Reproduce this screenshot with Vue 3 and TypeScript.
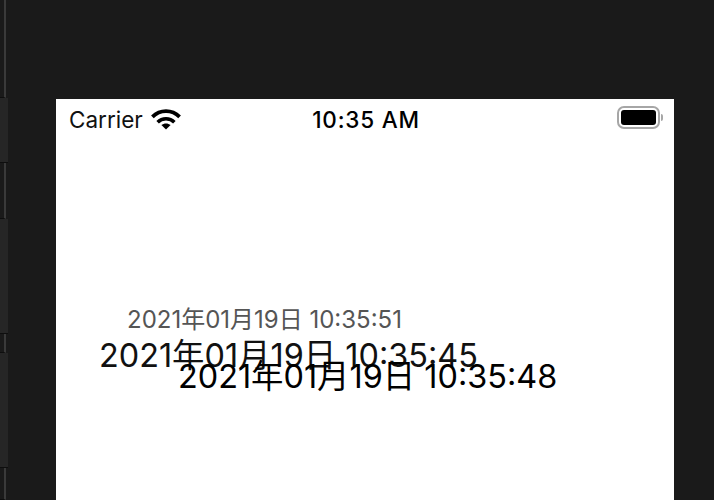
<script setup lang="ts">
const railSegments = [
  { kind: 'line', height: 98 },
  { kind: 'panel', height: 65 },
  { kind: 'line', height: 56 },
  { kind: 'panel', height: 115 },
  { kind: 'line', height: 19 },
  { kind: 'panel', height: 115 },
  { kind: 'line', height: 32 },
]
</script>

<template>
  <div class="window">
    <div class="rail">
      <div
        v-for="(seg, i) in railSegments"
        :key="i"
        :class="['seg', seg.kind]"
        :style="{ height: seg.height + 'px' }"
      ></div>
    </div>
    <div class="stage">
      <div class="phone">
        <div class="status">
          <div class="left">
            <span class="carrier">Carrier</span>
            <svg class="wifi" width="32" height="23" viewBox="0 0 30 22">
              <path d="M2 9.5C5.5 6 10 4 15 4s9.500 2 13 5.500" fill="none" stroke="#000" stroke-width="3.600"/>
              <path d="M7 14.500C9 12.500 12 11.300 15 11.300s6 1.200 8 3.200" fill="none" stroke="#000" stroke-width="3.400"/>
              <path d="M10.600 17.300C11.800 16.200 13.400 15.700 15 15.700s3.200.5 4.400 1.600L15 21.500z" fill="#000"/>
            </svg>
          </div>
          <span class="clock">10:35 AM</span>
          <div class="battery">
            <div class="shell"><div class="fill"></div></div>
            <div class="cap"></div>
          </div>
        </div>
        <div class="canvas">
          <span class="stamp small">2021年01月19日 10:35:51</span>
          <span class="stamp big first">2021年01月19日 10:35:45</span>
          <span class="stamp big second">2021年01月19日 10:35:48</span>
        </div>
      </div>
    </div>
  </div>
</template>

<style scoped>
.window {
  display: flex;
  width: 714px;
  height: 500px;
  overflow: hidden;
  background: #1a1a1a;
}
.rail {
  display: flex;
  flex-direction: column;
  width: 8px;
  flex: none;
}
.seg {
  flex: none;
  box-sizing: border-box;
  border-bottom: 1px solid #0e0e0e;
}
.seg.panel {
  background: #262626;
}
.seg.line {
  width: 6px;
  background: #1a1a1a;
  border-right: 2px solid #3a3a3a;
}
.stage {
  flex: 1;
  padding: 99px 40px 0 48px;
  box-sizing: border-box;
}
.phone {
  display: flex;
  flex-direction: column;
  height: 401px;
  background: #fff;
  color: #000;
  font-family: Inter, "Noto Sans CJK SC", sans-serif;
}
.status {
  display: grid;
  grid-template-columns: 1fr auto 1fr;
  align-items: center;
  height: 40px;
  padding: 0 11px 0 13px;
}
.left {
  display: flex;
  align-items: center;
  gap: 7px;
}
.carrier {
  font-size: 22.500px;
  color: #111;
}
.wifi {
  display: block;
  margin-bottom: 2px;
}
.clock {
  font-size: 22.500px;
  font-weight: 500;
  letter-spacing: 0.8px;
}
.battery {
  display: flex;
  align-items: center;
  justify-content: flex-end;
  gap: 1px;
  padding-bottom: 3px;
}
.shell {
  box-sizing: border-box;
  width: 43px;
  height: 23px;
  border: 2.500px solid #a6a6a6;
  border-radius: 7px;
  padding: 2px;
}
.fill {
  height: 100%;
  background: #000;
  border-radius: 3px;
}
.cap {
  width: 2px;
  height: 7px;
  background: #a6a6a6;
  border-radius: 0 2px 2px 0;
}
.canvas {
  position: relative;
  flex: 1;
}
.stamp {
  position: absolute;
  white-space: nowrap;
  line-height: 1;
}
.small {
  left: 71px;
  top: 169px;
  font-size: 24px;
  color: #555;
}
.big {
  font-size: 32.400px;
}
.first {
  left: 43px;
  top: 201px;
  color: #111;
}
.second {
  left: 122px;
  top: 222px;
  color: #000;
}
</style>
